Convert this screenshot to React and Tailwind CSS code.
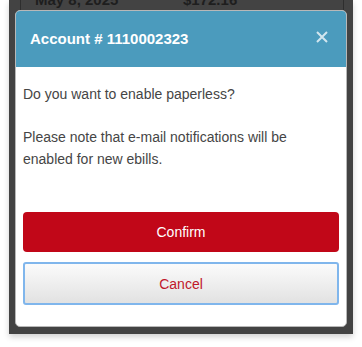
export default function App() {
  return (
    <div className="w-[362px] h-[347px] bg-white" style={{ fontFamily: '"Liberation Sans", Arial, sans-serif' }}>
      <div className="relative ml-[9px] w-[344px] h-[334px] bg-[#434343] overflow-hidden shadow-[0_3px_6px_rgba(0,0,0,0.18)]">
        {/* underlying page content peeking above the modal */}
        <div className="absolute left-[11px] top-0 h-[10px] w-px bg-[#2e2e2e]" />
        <div className="absolute left-[334px] top-0 h-[10px] w-px bg-[#2e2e2e]" />
        <div className="absolute left-[26px] top-[-9px] text-[15px] font-bold text-[#1e1e1e] leading-[18px]">May 8, 2025</div>
        <div className="absolute left-[174px] top-[-9px] text-[15px] font-bold text-[#1e1e1e] leading-[18px]">$172.16</div>

        <div className="relative ml-[6px] mt-[10px] w-[332px] h-[317px] bg-white rounded-[5px] border border-[#b8b8b8] overflow-hidden flex flex-col">
          <div className="h-[56px] shrink-0 bg-[#4b9bbd] flex items-center justify-between pl-[14px] pr-[18px]">
            <span className="text-white font-bold text-[15px]">Account # 1110002323</span>
            <svg width="12" height="12" viewBox="0 0 12 12" className="mt-[-4px]">
              <path d="M1 1L11 11M11 1L1 11" stroke="#d2e6ef" strokeWidth="2" strokeLinecap="butt" />
            </svg>
          </div>
          <div className="px-[7px] pt-[16px] flex flex-col text-[14px] leading-[22px] text-[#454545]">
            <p>Do you want to enable paperless?</p>
            <p className="mt-[21px]">Please note that e-mail notifications will be enabled for new ebills.</p>
            <button className="mt-[42px] h-[40px] w-full rounded-[4px] bg-[#c10718] text-white text-[14px]">Confirm</button>
            <button className="mt-[10px] h-[43px] w-full rounded-[3px] border-2 border-[#80b6ec] bg-gradient-to-b from-[#fbfbfb] to-[#e2e2e2] text-[#c0182a] text-[14px]">Cancel</button>
          </div>
        </div>
      </div>
    </div>
  );
}
